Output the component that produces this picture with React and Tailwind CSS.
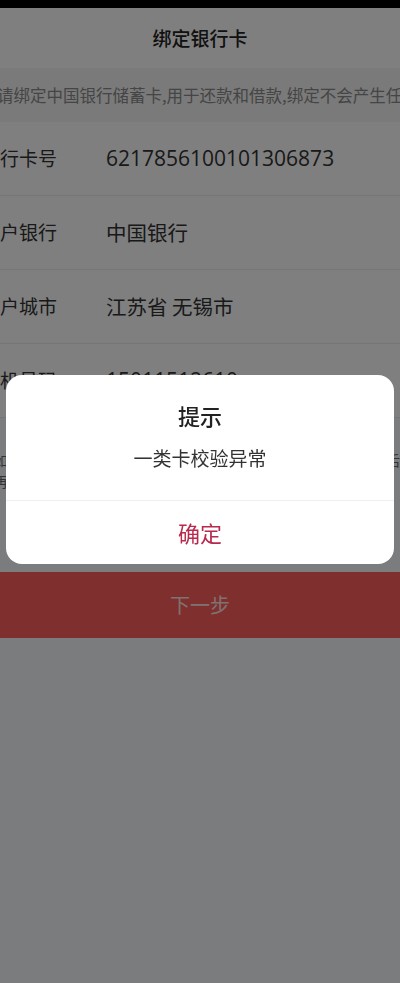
import React, { useState } from "react";

const rows = [
  { label: "银行卡号", value: "6217856100101306873", digits: true },
  { label: "开户银行", value: "中国银行" },
  { label: "开户城市", value: "江苏省 无锡市" },
  { label: "手机号码", value: "15011512610", digits: true },
];

const App = () => {
  const [showDialog, setShowDialog] = useState(true);

  return (
    <div
      className="relative min-h-screen bg-[#f6f8fc] overflow-hidden"
      style={{ fontFamily: '"Noto Sans CJK SC", "Noto Sans", sans-serif' }}
    >
      <div className="h-[8px] bg-black" />

      <div className="h-[60px] bg-white flex items-center justify-center">
        <p className="text-[19px] font-medium text-[#222]">绑定银行卡</p>
      </div>

      <div className="h-[54px] bg-[#f4f4f4] flex items-center overflow-hidden">
        <p className="ml-[-3px] whitespace-nowrap text-[16.5px] text-[#8a8a8a]">
          请绑定中国银行储蓄卡,用于还款和借款,绑定不会产生任何费用
        </p>
      </div>

      <div className="bg-white">
        {rows.map((row) => (
          <div
            key={row.label}
            className="h-[74px] border-b border-[#ececec] flex items-center overflow-hidden"
          >
            <span className="ml-[-19px] w-[125px] shrink-0 text-[19px] text-[#333]">
              {row.label}
            </span>
            {row.digits ? (
              <span className="text-[21px] text-[#333] font-['Open_Sans',sans-serif]">
                {row.value}
              </span>
            ) : (
              <span className="text-[20.5px] text-[#333]">{row.value}</span>
            )}
          </div>
        ))}
      </div>

      <div className="h-[154px] pt-[32px] overflow-hidden">
        <p className="ml-[-6px] w-[412px] text-[14px] leading-[21px] text-[#666]">
          如果您的银行卡未开通一类户功能，请先前往中国银行网点开通后再绑定，以免影响到账
        </p>
      </div>

      <button
        type="button"
        className="w-full h-[66px] bg-[#fe5e5a] flex items-center justify-center"
      >
        <span className="text-[20px] text-[#ffe4e0]">下一步</span>
      </button>

      {showDialog && (
        <div className="fixed inset-0 bg-black/50 flex justify-center items-start pt-[375px] px-[6px]">
          <div className="w-full bg-white rounded-[16px] overflow-hidden">
            <div className="pt-[26px] pb-[30px] flex flex-col items-center">
              <p className="text-[22px] leading-[28px] font-medium text-[#222]">
                提示
              </p>
              <p className="mt-[17px] text-[19px] leading-[24px] text-[#333]">
                一类卡校验异常
              </p>
            </div>
            <div className="h-px bg-[#f0f0f0]" />
            <button
              type="button"
              onClick={() => setShowDialog(false)}
              className="w-full h-[63px] flex items-center justify-center"
            >
              <span className="text-[22px] text-[#b8294d]">确定</span>
            </button>
          </div>
        </div>
      )}

      <div className="fixed top-0 left-0 right-0 h-[8px] bg-black" />
    </div>
  );
};

export default App;
